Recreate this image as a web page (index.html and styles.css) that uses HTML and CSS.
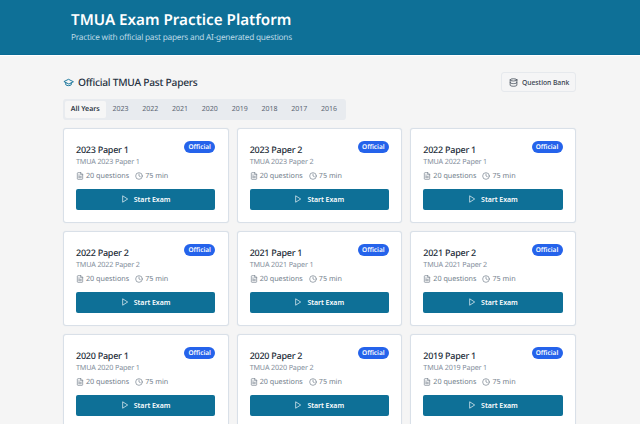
FILE: index.html
```html
<!DOCTYPE html>
<html>
<head>
	<meta charset="utf-8">
	<link rel="stylesheet" href="styles.css">
	<title>TMUA Exam Practice Platform</title>
</head>
<body>
	<svg class="sprite" width="0" height="0">
		<symbol id="i-doc" viewBox="0 0 24 24"><path d="M14 2H6a2 2 0 0 0-2 2v16a2 2 0 0 0 2 2h12a2 2 0 0 0 2-2V8z"/><path d="M14 2v6h6M16 13H8M16 17H8M10 9H8"/></symbol>
		<symbol id="i-clock" viewBox="0 0 24 24"><circle cx="12" cy="12" r="10"/><path d="M12 6v6l4 2"/></symbol>
		<symbol id="i-play" viewBox="0 0 24 24"><path d="M6 3l14 9-14 9z"/></symbol>
	</svg>

	<header class="top">
		<div class="wrap">
			<h1>TMUA Exam Practice Platform</h1>
			<p>Practice with official past papers and AI-generated questions</p>
		</div>
	</header>

	<div class="wrap main">
		<div class="heading">
			<h2>
				<svg class="cap" viewBox="0 0 24 24"><path d="M22 10L12 5 2 10l10 5z"/><path d="M6 12.5V17c3 2.5 9 2.5 12 0v-4.500"/></svg>
				Official TMUA Past Papers
			</h2>
			<button type="button" class="bank">
				<svg viewBox="0 0 24 24"><ellipse cx="12" cy="5" rx="9" ry="3"/><path d="M3 5v14c0 1.700 4 3 9 3s9-1.300 9-3V5"/><path d="M3 12c0 1.700 4 3 9 3s9-1.300 9-3"/></svg>
				Question Bank
			</button>
		</div>

		<div class="tabs">
			<span class="tab active">All Years</span>
			<span class="tab">2023</span>
			<span class="tab">2022</span>
			<span class="tab">2021</span>
			<span class="tab">2020</span>
			<span class="tab">2019</span>
			<span class="tab">2018</span>
			<span class="tab">2017</span>
			<span class="tab">2016</span>
		</div>

		<div class="grid" id="grid"></div>
	</div>

	<script>
		// liste des sujets
		var papers = [
			[2023, 1], [2023, 2], [2022, 1],
			[2022, 2], [2021, 1], [2021, 2],
			[2020, 1], [2020, 2], [2019, 1]
		];
		var html = "";
		for (var i = 0; i < papers.length; i++) {
			var name = papers[i][0] + " Paper " + papers[i][1];
			html += '<div class="card">'
				+ '<span class="badge">Official</span>'
				+ '<h3>' + name + '</h3>'
				+ '<div class="sub">TMUA ' + name + '</div>'
				+ '<div class="meta">'
				+ '<span><svg><use href="#i-doc"/></svg>20 questions</span>'
				+ '<span><svg><use href="#i-clock"/></svg>75 min</span>'
				+ '</div>'
				+ '<button type="button" class="start"><svg><use href="#i-play"/></svg>Start Exam</button>'
				+ '</div>';
		}
		document.getElementById("grid").innerHTML = html;
	</script>
</body>
</html>
```

FILE: styles.css
```css
html, body {
	height: 100%;
	overflow: hidden;
}

body {
	margin: 0;
	background-color: #f5f5f5;
	color: #212b36;
	font-family: "Noto Sans", "Open Sans", sans-serif;
	text-rendering: geometricPrecision;
}

.sprite {
	position: absolute;
}

svg {
	fill: none;
	stroke: currentColor;
	stroke-width: 2;
	stroke-linecap: round;
	stroke-linejoin: round;
}

.wrap {
	width: 513px;
	margin-left: 63px;
}

.top {
	height: 54px;
	background-color: #0e7097;
	border-bottom: 1px solid #0a6b95;
	box-shadow: 0 1px 0 #fff;
	color: #fff;
	overflow: hidden;
}

.top .wrap {
	margin-left: 71px;
	width: 500px;
	padding-top: 9px;
}

.top h1 {
	margin: 0;
	font-size: 15.200px;
	line-height: 22px;
	font-weight: 600;
}

.top p {
	margin: 0;
	font-size: 8.300px;
	letter-spacing: -0.25px;
	line-height: 13px;
	color: #bcd9e6;
}

.main {
	padding-top: 17px;
}

.heading {
	display: flex;
	justify-content: space-between;
	align-items: center;
	height: 20px;
}

h2 {
	display: flex;
	align-items: center;
	gap: 4px;
	margin: 0;
	font-size: 10.200px;
	letter-spacing: -0.25px;
	font-weight: 500;
	color: #25313f;
}

.cap {
	width: 11px;
	height: 11px;
	color: #0e7097;
}

.bank {
	display: flex;
	align-items: center;
	gap: 4px;
	width: 75px;
	height: 20px;
	padding: 0 0 0 7px;
	background-color: #f5f5f6;
	border: 1px solid #e6e9ed;
	border-radius: 3px;
	color: #37424f;
	font-family: inherit;
	font-size: 6.800px;
	letter-spacing: -0.05px;
	font-weight: 500;
}

.bank svg {
	width: 9px;
	height: 9px;
}

.tabs {
	display: inline-flex;
	margin-top: 7px;
	padding: 2px;
	background-color: #e8ebef;
	border-radius: 3px;
	height: 17px;
	gap: 0;
}

.tab {
	display: flex;
	align-items: center;
	padding: 0 6.900px;
	font-size: 7px;
	color: #5b6673;
	border-radius: 2px;
}

.tab.active {
	justify-content: center;
	box-sizing: border-box;
	width: 40.500px;
	padding: 0;
	background-color: #f6f6f6;
	color: #2c3743;
	font-weight: 600;
}

.grid {
	display: grid;
	grid-template-columns: repeat(3, 1fr);
	gap: 8px;
	margin-top: 8px;
}

.card {
	position: relative;
	box-sizing: border-box;
	height: 95px;
	padding: 13.500px 12.500px 0 12px;
	background-color: #fff;
	border: 1px solid #d9e0e8;
	border-radius: 3px;
	box-shadow: 0 0 1px #d9e0e8;
}

.badge {
	position: absolute;
	top: 12px;
	right: 12.500px;
	width: 31px;
	height: 11.500px;
	line-height: 11.500px;
	text-align: center;
	background-color: #2563eb;
	color: #fff;
	border-radius: 6px;
	font-size: 6.500px;
	font-weight: 600;
}

h3 {
	margin: 0;
	font-size: 9px;
	letter-spacing: -0.25px;
	line-height: 14px;
	font-weight: 500;
	color: #222c38;
}

.sub {
	font-size: 7.200px;
	letter-spacing: -0.15px;
	line-height: 11px;
	color: #838e9b;
}

.meta {
	display: flex;
	gap: 6px;
	margin-top: 3px;
	font-size: 7.200px;
	line-height: 11px;
	color: #727e8b;
}

.meta span {
	display: flex;
	align-items: center;
	gap: 2px;
}

.meta svg {
	width: 8px;
	height: 8px;
	margin-top: -1px;
}

.start {
	display: flex;
	align-items: center;
	justify-content: center;
	gap: 5px;
	width: 100%;
	height: 20.500px;
	margin-top: 7.500px;
	padding: 0;
	background-color: #0e7097;
	border: 0;
	border-radius: 2px;
	color: #fff;
	font-family: inherit;
	font-size: 7px;
	letter-spacing: -0.05px;
	font-weight: 600;
}

.start svg {
	width: 8px;
	height: 8px;
}
```
